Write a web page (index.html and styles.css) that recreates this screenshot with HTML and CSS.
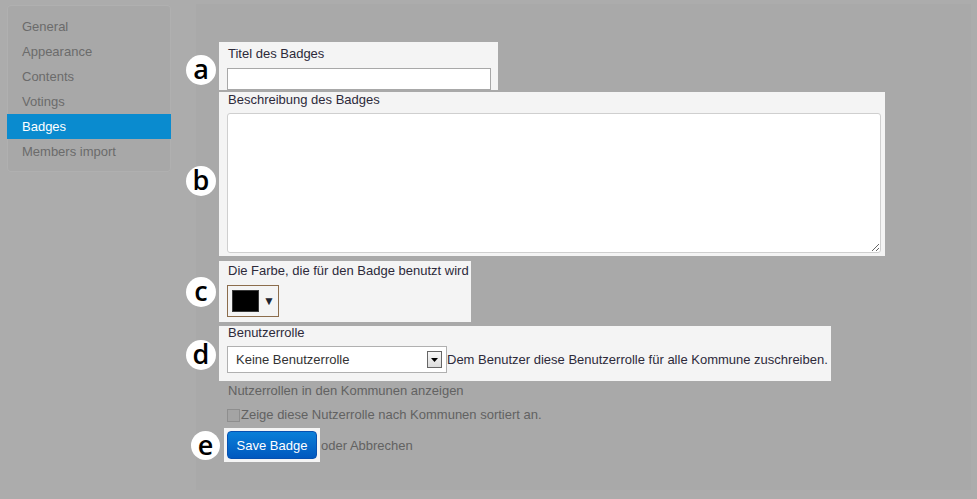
FILE: index.html
```html
<!DOCTYPE html>
<html lang="de">
<head>
<meta charset="utf-8">
<title>Badges</title>
<link rel="stylesheet" href="styles.css">
</head>
<body>
<div class="layout">
  <nav class="sidebar">
    <a class="nav-item">General</a>
    <a class="nav-item">Appearance</a>
    <a class="nav-item">Contents</a>
    <a class="nav-item">Votings</a>
    <a class="nav-item active">Badges</a>
    <a class="nav-item">Members import</a>
  </nav>
  <main class="panel">
    <div class="hl hl-a">
      <span class="marker m-a">a</span>
      <label class="lbl">Titel des Badges</label>
      <input class="text-input" type="text">
    </div>
    <div class="hl hl-b">
      <span class="marker m-b">b</span>
      <label class="lbl">Beschreibung des Badges</label>
      <textarea class="textarea"></textarea>
    </div>
    <div class="hl hl-c">
      <span class="marker m-c">c</span>
      <label class="lbl">Die Farbe, die für den Badge benutzt wird</label>
      <div class="picker"><span class="swatch"></span><span class="picker-arrow">▼</span></div>
    </div>
    <div class="hl hl-d">
      <span class="marker m-d">d</span>
      <label class="lbl lbl-tight">Benutzerrolle</label>
      <div class="select-row">
        <div class="select"><span>Keine Benutzerrolle</span><span class="select-btn"><svg width="7" height="4" viewBox="0 0 7 4"><path d="M0 0h7L3.5 4z" fill="#000"/></svg></span></div>
        <span class="help">Dem Benutzer diese Benutzerrolle für alle Kommune zuschreiben.</span>
      </div>
    </div>
    <div class="muted muted-title">Nutzerrollen in den Kommunen anzeigen</div>
    <div class="muted check-row"><span class="checkbox"></span>Zeige diese Nutzerrolle nach Kommunen sortiert an.</div>
    <div class="actions">
      <div class="hl hl-e">
        <span class="marker m-e">e</span>
        <button class="btn" type="button">Save Badge</button>
      </div>
      <span class="muted cancel">oder Abbrechen</span>
    </div>
  </main>
</div>
</body>
</html>
```
FILE: styles.css
```css
* { box-sizing: border-box; }
html, body { margin: 0; padding: 0; }
body {
  background: #acacac;
  font-family: "Liberation Sans", Arial, sans-serif;
  font-size: 13px;
  color: #2d2a3a;
  width: 977px;
  height: 499px;
  overflow: hidden;
}
.layout {
  display: flex;
  align-items: flex-start;
  padding: 4px 0 0 7px;
}
.sidebar {
  margin-top: 1px;
  width: 164px;
  height: 167px;
  background: #a8a8a8;
  border-radius: 4px;
  box-shadow: inset 0 0 0 1px #b0b0b0;
  padding: 9px 0 8px;
  display: flex;
  flex-direction: column;
}
.nav-item {
  display: block;
  height: 25px;
  line-height: 25px;
  padding-left: 15px;
  color: #6b6b6b;
}
.nav-item.active {
  background: #0a8bcf;
  color: #fff;
}
.panel {
  margin-left: 25px;
  width: 775px;
  height: 486px;
  background: #a9a9a9;
  padding: 38px 0 0 23px;
  display: flex;
  flex-direction: column;
  align-items: flex-start;
}
.hl {
  position: relative;
  background: #f4f4f4;
  display: flex;
  flex-direction: column;
  align-items: flex-start;
}
.marker {
  position: absolute;
  left: -33px;
  width: 30px;
  height: 30px;
  border-radius: 50%;
  background: #fff;
  color: #000;
  font-family: "Open Sans", "DejaVu Sans", sans-serif;
  font-weight: 600;
  font-size: 27px;
  line-height: 27px;
  text-align: center;
}
.m-a { top: 13px; }
.m-b { top: 74px; }
.m-c { top: 16px; }
.m-d { top: 14px; }
.m-e { top: 3px; left: -33px; width: 29px; height: 29px; }
.lbl {
  display: block;
  line-height: 16px;
  padding-left: 9px;
}
.hl-a { width: 279px; padding: 3px 0 0 8px; }
.hl-a .lbl { padding-left: 1px; line-height: 18px; }
.text-input {
  margin-top: 5px;
  width: 264px;
  height: 22px;
  border: 1px solid #a8a8a8;
  background: #fff;
  padding: 0;
}
.hl-b { margin-top: 2px; width: 666px; padding: 0 0 3px 8px; }
.hl-b .lbl { padding-left: 1px; }
.textarea {
  margin-top: 5px;
  width: 654px;
  height: 140px;
  border: 1px solid #cfcfcf;
  border-radius: 3px;
  background: #fff;
  resize: both;
  display: block;
}
.hl-c { margin-top: 5px; padding: 2px 2px 5px 8px; }
.hl-c .lbl { padding-left: 1px; }
.picker {
  margin-top: 6px;
  width: 52px;
  height: 32px;
  border: 1px solid #8c6d4c;
  display: flex;
  align-items: center;
  padding-left: 4px;
  gap: 4px;
}
.swatch {
  width: 27px;
  height: 22px;
  background: #000;
  border: 1px solid #3a3a3a;
}
.picker-arrow {
  font-size: 12px;
  color: #1e2430;
}
.hl-d { margin-top: 4px; padding: 0 3px 8px 8px; }
.hl-d .lbl { padding-left: 1px; line-height: 14px; }
.select-row {
  margin-top: 6px;
  display: flex;
  align-items: center;
}
.select {
  width: 220px;
  height: 27px;
  border: 1px solid #b0b0b0;
  background: #fff;
  display: flex;
  align-items: center;
  justify-content: space-between;
  padding: 0 4px 0 8px;
  color: #333;
}
.select-btn {
  width: 15px;
  height: 17px;
  border: 1px solid #666;
  background: linear-gradient(#f8f8f8, #dcdcdc);
  display: flex;
  align-items: center;
  justify-content: center;
}
.help { margin-left: 0; }
.muted { color: #626262; }
.muted-title { margin: 1px 0 0 9px; line-height: 18px; }
.check-row {
  margin: 6px 0 0 8px;
  line-height: 18px;
  display: flex;
  align-items: center;
}
.checkbox {
  width: 13px;
  height: 13px;
  border: 1px solid #8e8e8e;
  background: #a4a4a4;
  margin-right: 1px;
}
.actions {
  margin: 4px 0 0 5px;
  display: flex;
  align-items: center;
}
.hl-e { padding: 3px; }
.btn {
  width: 90px;
  height: 28px;
  border: 1px solid #0650b0;
  border-radius: 4px;
  background: linear-gradient(#0a7fd8, #0058bf);
  color: #fff;
  font-family: "Liberation Sans", Arial, sans-serif;
  font-size: 13px;
  padding: 0;
}
.cancel { margin-left: 1px; }
```
